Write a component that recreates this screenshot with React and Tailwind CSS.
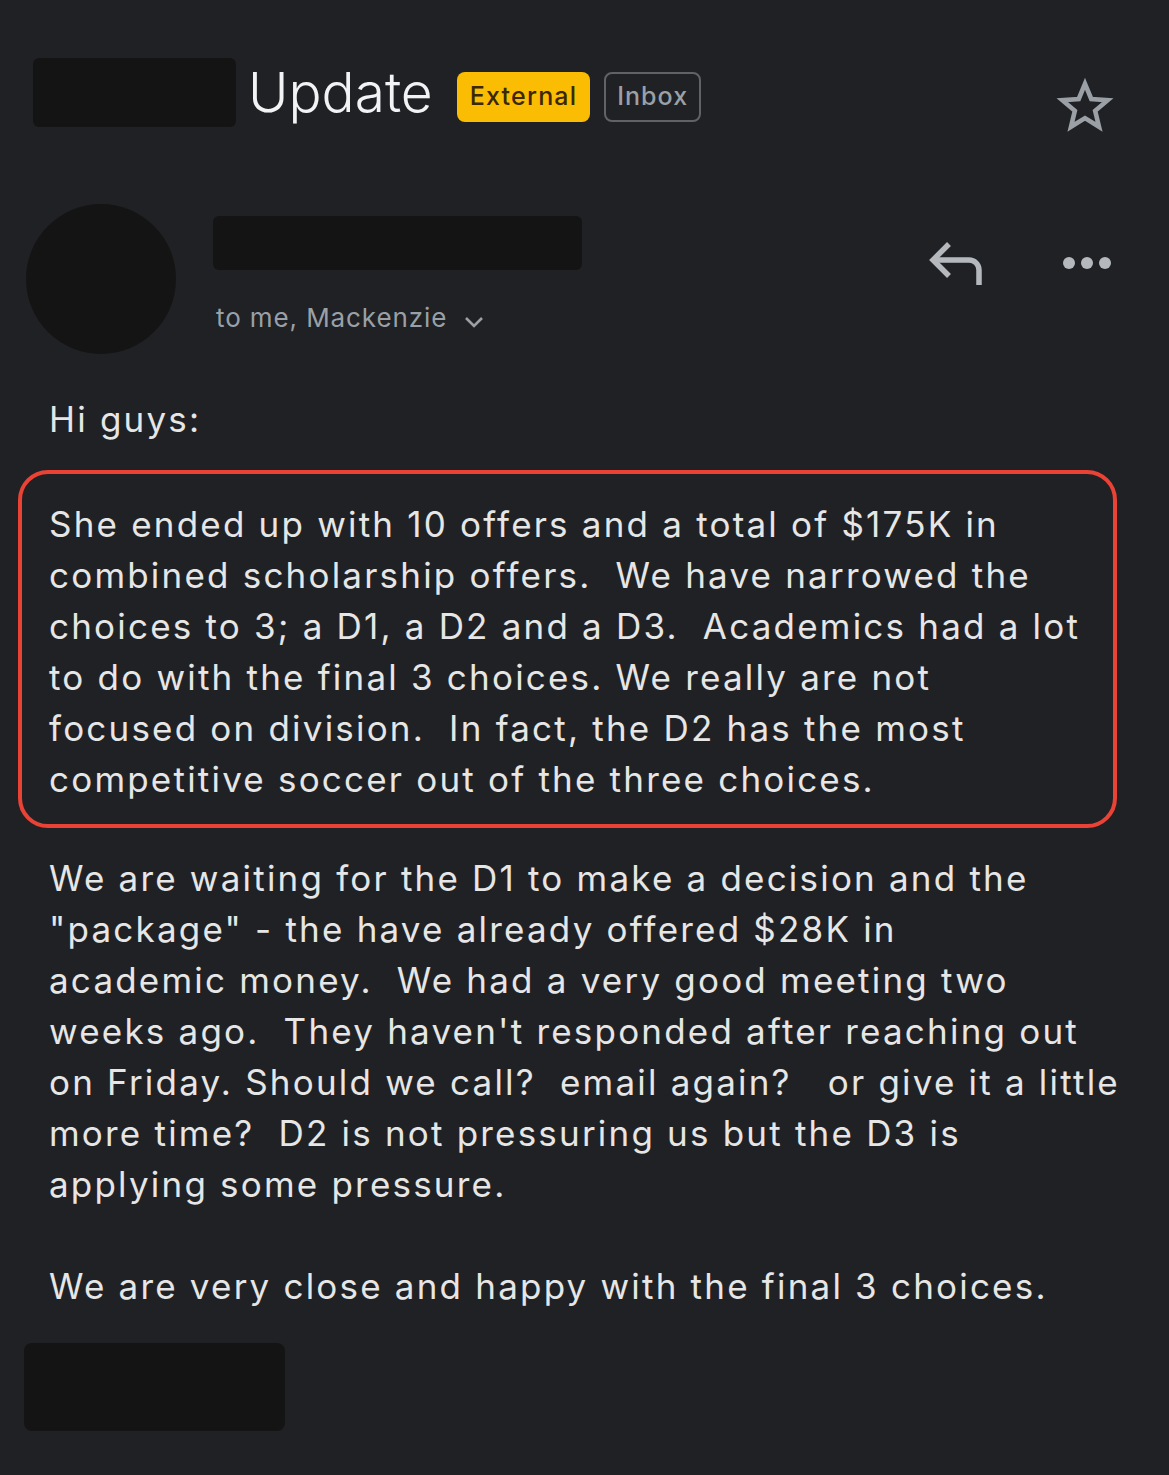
const lines1 = [
  'She ended up with 10 offers and a total of $175K in',
  'combined scholarship offers.  We have narrowed the',
  'choices to 3; a D1, a D2 and a D3.  Academics had a lot',
  'to do with the final 3 choices. We really are not',
  'focused on division.  In fact, the D2 has the most',
  'competitive soccer out of the three choices.',
]

const lines2 = [
  'We are waiting for the D1 to make a decision and the',
  '"package" - the have already offered $28K in',
  'academic money.  We had a very good meeting two',
  "weeks ago.  They haven't responded after reaching out",
  'on Friday. Should we call?  email again?   or give it a little',
  'more time?  D2 is not pressuring us but the D3 is',
  'applying some pressure.',
]

function Star() {
  return (
    <svg width="60" height="58" viewBox="0 0 24 24" fill="none" stroke="#9aa0a6" strokeWidth="1.9" strokeLinejoin="miter">
      <path d="M12 2.8l2.6 6.3 6.8.5-5.2 4.4 1.6 6.6L12 17l-5.8 3.6 1.6-6.6-5.2-4.4 6.8-.5z" />
    </svg>
  )
}

function Reply() {
  return (
    <svg width="56" height="44" viewBox="0 0 56 44" fill="none" stroke="#b5b9be" strokeWidth="5.5">
      <path d="M20 3L4 19l16 16" />
      <path d="M4 19h36a10 10 0 0 1 10 10v15" />
    </svg>
  )
}

export default function App() {
  return (
    <div
      className="h-[1475px] w-[1169px] overflow-hidden bg-[#202124] text-[#e8eaed]"
      style={{ fontFamily: 'Inter, "Noto Sans", sans-serif' }}
    >
      <div className="flex items-start justify-between pl-[33px] pr-[54px] pt-[58px]">
        <div className="flex items-center">
          <div className="h-[69px] w-[203px] rounded-md bg-[#141414]" />
          <span className="ml-[12px] text-[55px] leading-[69px] font-light text-[#f1f3f4]">Update</span>
          <span className="ml-[24px] mt-[8px] flex h-[50px] items-center rounded-lg bg-[#fbbc04] px-[13px] text-[25px] tracking-[1.2px] font-medium text-[#3b2700]">
            External
          </span>
          <span className="ml-[14px] mt-[8px] flex h-[50px] items-center rounded-lg border-2 border-[#5f6368] px-[11px] text-[25px] tracking-[1px] font-medium text-[#9aa0a6]">
            Inbox
          </span>
        </div>
        <div className="mt-[19px]">
          <Star />
        </div>
      </div>

      <div className="mt-[69px] flex items-start pl-[26px] pr-[58px]">
        <div className="h-[150px] w-[150px] shrink-0 rounded-full bg-[#141414]" />
        <div className="ml-[37px] flex-1 pt-[12px]">
          <div className="h-[54px] w-[369px] rounded-md bg-[#141414]" />
          <div className="mt-[28px] flex items-center pl-[3px] text-[26px] tracking-[0.9px] text-[#9aa0a6]">
            to me, Mackenzie
            <svg className="ml-[16px] mt-[8px]" width="22" height="14" viewBox="0 0 22 14" fill="none" stroke="#9aa0a6" strokeWidth="2.6">
              <path d="M3 3l8 8 8-8" />
            </svg>
          </div>
        </div>
        <div className="flex items-center gap-[78px] pt-[37px]">
          <Reply />
          <div className="flex gap-[6px]">
            <span className="h-[12px] w-[12px] rounded-full bg-[#b5b9be]" />
            <span className="h-[12px] w-[12px] rounded-full bg-[#b5b9be]" />
            <span className="h-[12px] w-[12px] rounded-full bg-[#b5b9be]" />
          </div>
        </div>
      </div>

      <div className="pl-[49px] text-[35px] leading-[51px] tracking-[2.2px] whitespace-pre text-[#e6e6e6]">
        <div className="mt-[40px]">Hi guys:</div>
        <div className="-ml-[31px] mr-[52px] mt-[25px] rounded-[30px] border-4 border-[#ea4335] pb-[19px] pl-[27px] pt-[25px]">
          {lines1.map((l) => (
            <div key={l}>{l}</div>
          ))}
        </div>
        <div className="mt-[25px]">
          {lines2.map((l) => (
            <div key={l}>{l}</div>
          ))}
          <div className="h-[51px]" />
          <div>We are very close and happy with the final 3 choices.</div>
        </div>
      </div>

      <div className="ml-[24px] mt-[31px] h-[88px] w-[261px] rounded-lg bg-[#141414]" />
    </div>
  )
}
